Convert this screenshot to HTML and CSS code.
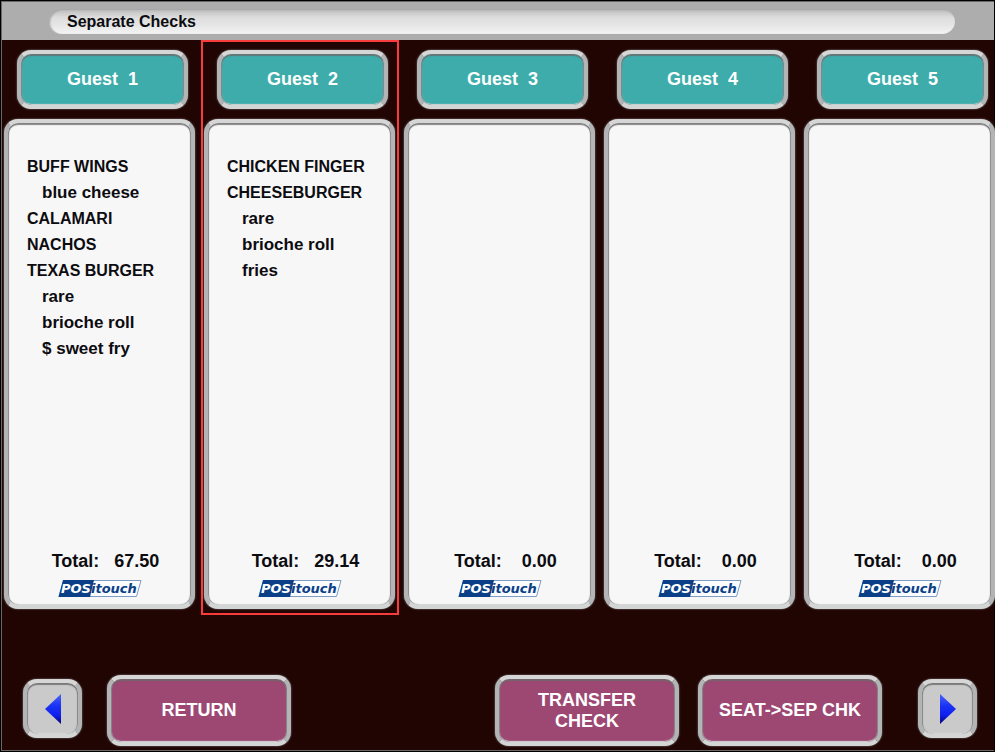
FILE: index.html
```html
<!DOCTYPE html>
<html lang="en">
<head>
<meta charset="utf-8">
<title>Separate Checks</title>
<link rel="stylesheet" href="styles.css">
</head>
<body>
<svg class="defs" aria-hidden="true">
  <defs>
    <linearGradient id="blue" x1="0" y1="0" x2="0" y2="1">
      <stop offset="0" stop-color="#4a63ff"/>
      <stop offset=".4" stop-color="#1a32f2"/>
      <stop offset=".7" stop-color="#1020f0"/>
      <stop offset="1" stop-color="#04046e"/>
    </linearGradient>
    <symbol id="logo" viewBox="0 0 84 20">
      <path d="M5.500 1.500H83L78.500 17.500H1Z" fill="#fbfcfe" stroke="#7f9cc2"/>
      <path d="M5 1H36L32 18H.5Z" fill="#0b4088"/>
      <text class="logo-text" x="3" y="14" fill="#fff">POS</text>
      <text class="logo-text" x="33" y="14" fill="#0b4088">itouch</text>
    </symbol>
  </defs>
</svg>
<div class="screen">
  <header class="bar"><h1 class="title">Separate Checks</h1></header>
  <main class="checks">
    <section class="check">
      <button class="key guest">Guest  1</button>
      <div class="card">
        <ul class="items">
          <li>BUFF WINGS</li>
          <li class="mod">blue cheese</li>
          <li>CALAMARI</li>
          <li>NACHOS</li>
          <li>TEXAS BURGER</li>
          <li class="mod">rare</li>
          <li class="mod">brioche roll</li>
          <li class="mod">$ sweet fry</li>
        </ul>
        <p class="total">Total:   67.50</p>
        <svg class="logo"><use href="#logo"/></svg>
      </div>
    </section>
    <section class="check selected">
      <button class="key guest">Guest  2</button>
      <div class="card">
        <ul class="items">
          <li>CHICKEN FINGER</li>
          <li>CHEESEBURGER</li>
          <li class="mod">rare</li>
          <li class="mod">brioche roll</li>
          <li class="mod">fries</li>
        </ul>
        <p class="total">Total:   29.14</p>
        <svg class="logo"><use href="#logo"/></svg>
      </div>
    </section>
    <section class="check">
      <button class="key guest">Guest  3</button>
      <div class="card">
        <ul class="items"></ul>
        <p class="total">Total:    0.00</p>
        <svg class="logo"><use href="#logo"/></svg>
      </div>
    </section>
    <section class="check">
      <button class="key guest">Guest  4</button>
      <div class="card">
        <ul class="items"></ul>
        <p class="total">Total:    0.00</p>
        <svg class="logo"><use href="#logo"/></svg>
      </div>
    </section>
    <section class="check">
      <button class="key guest">Guest  5</button>
      <div class="card">
        <ul class="items"></ul>
        <p class="total">Total:    0.00</p>
        <svg class="logo"><use href="#logo"/></svg>
      </div>
    </section>
  </main>
  <footer class="actions">
    <button class="key arrow" aria-label="Previous guests"><svg width="16" height="30" viewBox="0 0 16 30"><path d="M16 0V30L0 15Z" fill="url(#blue)"/></svg></button>
    <button class="key action">RETURN</button>
    <div class="group">
      <button class="key action">TRANSFER<br>CHECK</button>
      <button class="key action">SEAT-&gt;SEP CHK</button>
    </div>
    <button class="key arrow" aria-label="Next guests"><svg width="16" height="30" viewBox="0 0 16 30"><path d="M0 0V30L16 15Z" fill="url(#blue)"/></svg></button>
  </footer>
</div>
</body>
</html>
```
FILE: styles.css
```css
* { box-sizing: border-box; }

body {
  margin: 0;
  padding: 1px;
  background: #000;
  font-family: "Liberation Sans", Arial, sans-serif;
  font-weight: bold;
  color: #0c0c10;
}

.defs { position: absolute; width: 0; height: 0; }

.screen {
  display: flex;
  flex-direction: column;
  min-height: calc(100vh - 2px);
  border: 1px solid #6b6767;
  border-right: 0;
  background: #200503;
}

.bar {
  padding: 7px 39px 6px 47px;
  background: #adadad;
}

.title {
  margin: 0;
  padding: 0 18px;
  border-radius: 13px;
  background: linear-gradient(#bcbcbc, #dedede 35%, #e4e4e4 60%, #f4f4f4);
  box-shadow: inset 1px 1px 2px #a2a2a2;
  font-size: 16px;
  line-height: 25px;
}

.checks {
  flex: 1;
  display: grid;
  grid-template-columns: repeat(5, minmax(0, 1fr));
  gap: 9px;
  margin-right: -1px;
  padding: 10px 0 0 2px;
}

.check {
  position: relative;
  display: flex;
  flex-direction: column;
  gap: 10px;
}

.selected::after {
  content: "";
  position: absolute;
  inset: -10px -4px -6px -3px;
  border: 2px solid #f83c3c;
  pointer-events: none;
}

.key, .card {
  border: 4px solid;
  border-color: #d6d6d6 #b2b4b6 #d4d6d6 #b2b4b6;
  border-radius: 14px;
  box-shadow:
    inset 0 2px 1px #6a6a6acc,
    inset 1px 0 1px #8a8a8a,
    inset -1px 0 1px #8a8a8a,
    inset 0 -1px 1px #e6e6e6,
    0 0 2px #8a8a8a;
}

.key {
  margin: 0;
  padding: 0;
  font: inherit;
  font-size: 18px;
  color: #fff;
  cursor: pointer;
}

.guest {
  height: 59px;
  margin: 0 7px 0 13px;
  background: #3eacab;
  white-space: pre;
}

.card {
  flex: 1;
  display: flex;
  flex-direction: column;
  padding: 31px 7px 6px 19px;
  background: #f7f7f7;
}

.items {
  flex: 1;
  margin: 0;
  padding: 0;
  list-style: none;
  font-size: 16px;
  line-height: 26px;
}

.mod { padding-left: 15px; font-size: 17px; }

.total {
  margin: 0 0 7px;
  font-size: 18px;
  line-height: 22px;
  text-align: center;
  white-space: pre;
}

.logo {
  align-self: center;
  width: 84px;
  height: 20px;
  margin-right: 12px;
}

.logo-text {
  font: italic bold 13px "DejaVu Sans", sans-serif;
}

.actions {
  display: flex;
  align-items: center;
  margin-top: 66px;
  padding: 0 17px 4px 21px;
}

.arrow {
  display: flex;
  align-items: center;
  justify-content: center;
  width: 59px;
  height: 59px;
  margin-bottom: 4px;
  background: #cacaca;
}

.action {
  width: 184px;
  height: 71px;
  margin-left: 25px;
  background: #9d4873;
  line-height: 21px;
}

.group {
  display: flex;
  gap: 19px;
  margin: 0 36px 0 auto;
}

.group .action { margin-left: 0; }
```
